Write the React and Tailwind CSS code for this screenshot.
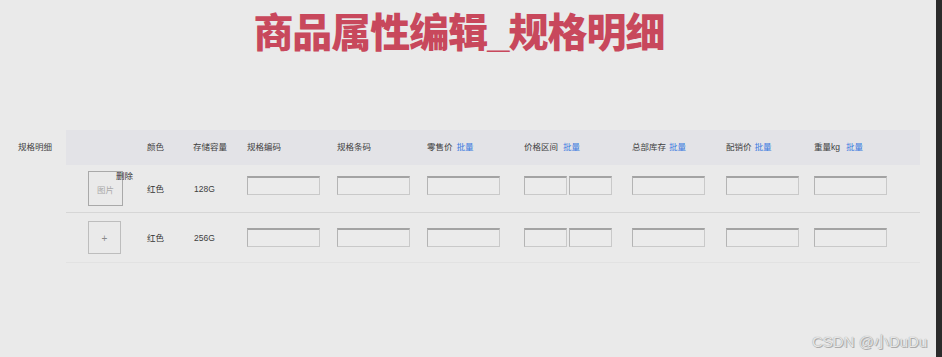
import React from "react";

const cols = [
  { key: "img", w: "w-[81px]" },
  { key: "color", label: "颜色", w: "w-[46px]" },
  { key: "storage", label: "存储容量", w: "w-[54px]" },
  { key: "code", label: "规格编码", w: "w-[90px]" },
  { key: "barcode", label: "规格条码", w: "w-[90px]" },
  { key: "retail", label: "零售价", batch: "ml-[4px]", w: "w-[97px]" },
  { key: "range", label: "价格区间", batch: "ml-[5px]", w: "w-[108px]" },
  { key: "stock", label: "总部库存", batch: "ml-[3px]", w: "w-[94px]" },
  { key: "dist", label: "配销价", batch: "ml-[3px]", w: "w-[88px]" },
  { key: "weight", label: "重量kg", batch: "ml-[6px]", w: "w-[106px]" },
];

const rows = [
  { color: "红色", storage: "128G", hasImg: true },
  { color: "红色", storage: "256G", hasImg: false },
];

const Field = ({ w = "w-[73px]", shift }) => (
  <div
    className={`${w} h-[19px] shrink-0 border border-[#c9c9c9] border-l-[#b4b4b4] border-t-2 border-t-[#a3a3a3] bg-[#ebebeb] ${shift}`}
  />
);

const App = () => {
  return (
    <div
      className="flex h-[357px] w-full bg-[#eaeaea] text-[8.5px] text-[#404040]"
      style={{ fontFamily: '"Liberation Sans", "Noto Sans CJK SC", sans-serif' }}
    >
      <div className="relative flex flex-1 flex-col overflow-hidden">
        <div className="flex justify-center pr-[18px] pt-[13px]">
          <h1 className="text-[40px] font-black leading-none tracking-[-1px] text-[#c8485c]">
            商品属性编辑_规格明细
          </h1>
        </div>

        <div className="mt-[77px] flex">
          <div className="flex h-[35px] w-[66px] shrink-0 items-center pl-[18px]">规格明细</div>

          <div className="flex flex-col">
            <div className="flex h-[35px] items-center bg-[#e3e3e7]">
              {cols.map((c) => (
                <div key={c.key} className={`${c.w} flex shrink-0 items-center`}>
                  {c.label}
                  {c.batch && <span className={`${c.batch} text-[#3a7ae0]`}>批量</span>}
                </div>
              ))}
            </div>

            {rows.map((r, i) => {
              const shift = i === 0 ? "mb-[6px]" : "";
              return (
                <div
                  key={i}
                  className={`flex items-center border-b ${
                    i === 0 ? "h-[48px] border-[#d6d6d6]" : "h-[50px] border-[#e2e2e2]"
                  }`}
                >
                  <div className="flex w-[81px] shrink-0 pl-[22px]">
                    {r.hasImg ? (
                      <div className="relative flex h-[35px] w-[35px] items-center justify-center border border-[#a9a9a9] pt-[3px] text-[#a9a9a9]">
                        图片
                        <span className="absolute left-[27px] top-[-2px] whitespace-nowrap text-[#333]">
                          删除
                        </span>
                      </div>
                    ) : (
                      <div className="flex h-[33px] w-[33px] items-center justify-center border border-[#bdbdbd] pt-[2px] text-[10px] text-[#8a8a8a]">
                        +
                      </div>
                    )}
                  </div>
                  <div className="w-[46px] shrink-0 pt-[1px] text-[#333]">{r.color}</div>
                  <div className="w-[54px] shrink-0 pl-[1px] pt-[1px]">{r.storage}</div>
                  <div className="w-[90px] shrink-0">
                    <Field shift={shift} />
                  </div>
                  <div className="w-[90px] shrink-0">
                    <Field shift={shift} />
                  </div>
                  <div className="w-[97px] shrink-0">
                    <Field shift={shift} />
                  </div>
                  <div className="flex w-[108px] shrink-0 gap-[2px]">
                    <Field w="w-[43px]" shift={shift} />
                    <Field w="w-[43px]" shift={shift} />
                  </div>
                  <div className="w-[94px] shrink-0">
                    <Field shift={shift} />
                  </div>
                  <div className="w-[88px] shrink-0">
                    <Field shift={shift} />
                  </div>
                  <div className="w-[106px] shrink-0">
                    <Field shift={shift} />
                  </div>
                </div>
              );
            })}
          </div>
        </div>

        <div className="pointer-events-none absolute left-[812px] top-[331px] whitespace-nowrap text-[15px] text-[#e6e6e6] [text-shadow:0_0_1px_#8c8c8c,1px_1px_0_#b0b0b0]">
          CSDN @小DuDu
        </div>
      </div>
      <div className="w-[6px] shrink-0 bg-[#2b2b2b]" />
    </div>
  );
};

export default App;
